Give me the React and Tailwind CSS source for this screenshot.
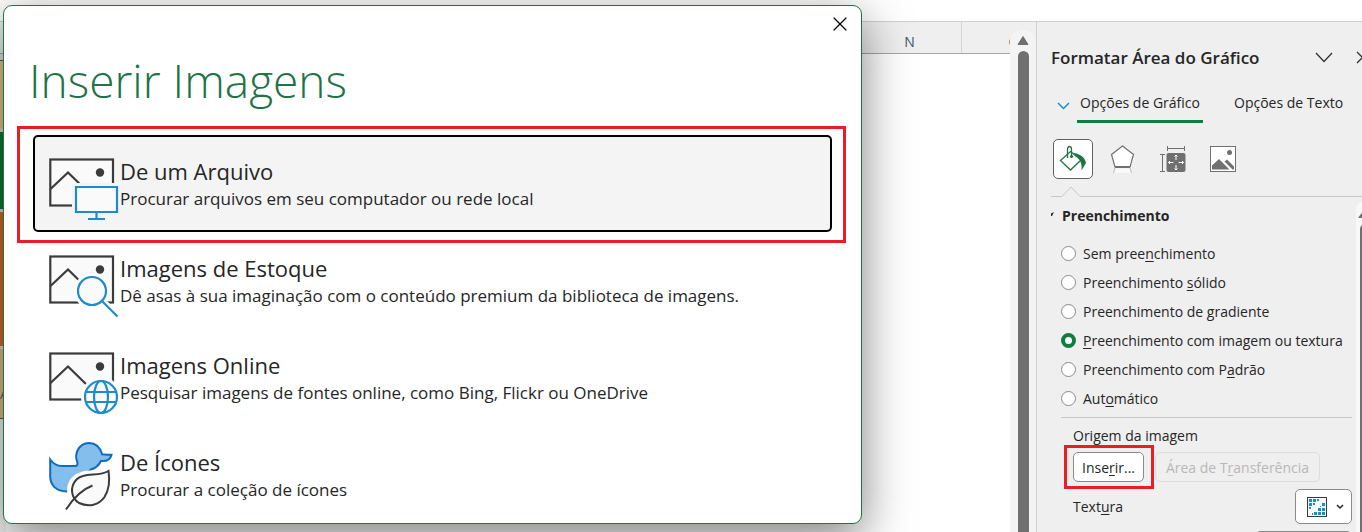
import { useState } from "react"
import { X } from "lucide-react"

const sources = [
  {
    id: "file",
    title: "De um Arquivo",
    description: "Procurar arquivos em seu computador ou rede local",
  },
  {
    id: "stock",
    title: "Imagens de Estoque",
    description: "Dê asas à sua imaginação com o conteúdo premium da biblioteca de imagens.",
  },
  {
    id: "online",
    title: "Imagens Online",
    description: "Pesquisar imagens de fontes online, como Bing, Flickr ou OneDrive",
  },
  {
    id: "icons",
    title: "De Ícones",
    description: "Procurar a coleção de ícones",
  },
]

// before / key / after: the key letter is the underlined shortcut
const fills = [
  ["Sem pree", "n", "chimento"],
  ["Preenchimento ", "s", "ólido"],
  ["Preenchimento de ", "g", "radiente"],
  ["", "P", "reenchimento com imagem ou textura"],
  ["Preenchimento com P", "a", "drão"],
  ["Aut", "o", "mático"],
]

const SourceIcon = ({ id }) => {
  if (id === "icons") {
    return (
      <svg width="70" height="72" viewBox="0 2 70 72" fill="none" className="shrink-0">
        <path
          d="M1.200 19.500C4 23.500 8 26 13 26H26C28 26 29 25 28.300 22C26.500 18 27 14 28.500 10.500C31 5.500 35 3 40 3C46 3 51 7 53.200 14.300C56 15 59 14.700 62.500 14.700C61.500 19 57.500 21.500 52 21C50 25 47 28 42 29.500L18 51.500C7 51.500 1.200 45 1.200 36Z"
          fill="#83beec"
          stroke="#0f6cbd"
          strokeWidth="2"
        />
        <path
          d="M60 31C49 37 35 31 26 40C19 48 22 60 31 64C40 68 51 66 56 58C61 50 61 40 60 31Z"
          fill="#fff"
          stroke="#fff"
          strokeWidth="8"
        />
        <path
          d="M59.500 31C50 37 35 32 27.500 39.500C20.500 47 22 58 30 63C40 67.500 50 65 55.500 57C60.500 49 61 40 59.500 31Z"
          fill="#fafafa"
          stroke="#3b3b3b"
          strokeWidth="2"
        />
        <path d="M43.500 45.500C33 49.500 25 57 17 69.500" stroke="#3b3b3b" strokeWidth="2" />
      </svg>
    )
  }

  const halo = id === "file" ? "#f4f4f4" : "#fff"

  return (
    <svg width="70" height="72" viewBox="0 0 70 72" fill="none" className="shrink-0">
      <rect x="1.300" y="8.500" width="62.700" height="46" fill="#fafafa" stroke="#3b3b3b" strokeWidth="2.200" />
      <path d="M1.500 38L19 21.500L39 41" stroke="#3b3b3b" strokeWidth="2.200" />
      <circle cx="51" cy="21.500" r="4.200" fill="#3b3b3b" />
      {id === "file" && (
        <>
          <path d="M23 32H70V64H23Z" fill={halo} />
          <path d="M27 36H68V61H27Z" fill="#fafafa" stroke="#1e8bcd" strokeWidth="2.200" />
          <path d="M47.500 62V67.500M39 68H56" stroke="#1e8bcd" strokeWidth="2.200" />
        </>
      )}
      {id === "stock" && (
        <>
          <circle cx="43" cy="43" r="18" fill={halo} />
          <path d="M53 53L69 69" stroke={halo} strokeWidth="7" />
          <circle cx="43" cy="43" r="14" fill="#fafafa" stroke="#1e8bcd" strokeWidth="2.200" />
          <path d="M53 53L68.500 68.500" stroke="#1e8bcd" strokeWidth="2.200" />
        </>
      )}
      {id === "online" && (
        <>
          <circle cx="52" cy="52" r="20" fill={halo} />
          <circle cx="52" cy="52" r="16" fill="#fafafa" stroke="#1e8bcd" strokeWidth="2.200" />
          <ellipse cx="52" cy="52" rx="7" ry="16" stroke="#1e8bcd" strokeWidth="2.200" />
          <path d="M37 47H67M37 57H67" stroke="#1e8bcd" strokeWidth="2.200" />
        </>
      )}
    </svg>
  )
}

const InsertDialog = () => {
  const [selected, setSelected] = useState("file")

  return (
    <div
      role="dialog"
      aria-labelledby="dialog-title"
      className="absolute top-[5px] right-[500px] left-[3px] rounded-[9px] border border-[#217346] bg-white pr-[29px] pl-[29px] shadow-[0_14px_48px_rgba(0,0,0,0.5)]"
    >
      <button aria-label="Fechar" className="absolute top-[8px] right-[11px] flex size-5 items-center justify-center">
        <X className="size-6 shrink-0 text-black" strokeWidth={1.2} />
      </button>
      <h1 id="dialog-title" className="-ml-1 pt-[42px] text-[46px] leading-[64px] font-light text-[#217346]">
        Inserir Imagens
      </h1>
      <ul className="pt-[23px]">
        {sources.map((source) => (
          <li key={source.id} className="relative">
            <button
              onClick={() => setSelected(source.id)}
              className={`flex h-[97px] w-full items-start rounded-[5px] border-2 pt-[14px] pl-[14px] text-left ${
                selected === source.id ? "border-black bg-[#f4f4f4]" : "border-transparent"
              }`}
            >
              <SourceIcon id={source.id} />
              <span className="pt-[5px] pl-px text-[#262626]">
                <span className="block text-[22px] leading-[30px]">{source.title}</span>
                <span className="block text-[17px] leading-[26px]">{source.description}</span>
              </span>
            </button>
            {source.id === "file" && (
              <div className="pointer-events-none absolute -top-[9px] -right-[14px] -bottom-[11px] -left-[16px] border-3 border-[#ed1c24]" />
            )}
          </li>
        ))}
      </ul>
    </div>
  )
}

const Sheet = () => (
  <div className="flex min-w-0 flex-1 flex-col overflow-hidden bg-white">
    <div className="flex h-8 shrink-0 border-b border-[#a6a6a6] bg-[#efefef] text-[14px] text-[#44546a]">
      <div className="flex-1" />
      <div className="flex w-[104px] items-center justify-center border-r border-[#d4d4d4] pt-[9px] pb-px">N</div>
      <div className="-mr-[56px] flex w-[104px] shrink-0 items-center justify-center pt-[9px] pb-px">O</div>
    </div>
    {/* edge of the chart left of the dialog */}
    <div className="flex w-[6px] flex-1 flex-col">
      <div className="h-[7px] border-b border-[#555] bg-[#e4e4e4]" />
      <div className="h-[68px] bg-[#e6c88f]" />
      <div className="h-[80px] border-t-3 border-[#ddd] bg-[#0f7a37]" />
      <div className="h-[137px] border-t-3 border-[#ddd] bg-[#dc6a28]" />
      <div className="h-[73px] border-t-3 border-b border-t-[#ddd] border-b-[#555] bg-[#e0c084] pt-9 text-[13px] text-[#555]">
        A
      </div>
      <div className="flex-1 bg-[#f4f4f4]" />
    </div>
  </div>
)

const SheetScrollbar = () => (
  <div className="flex w-[26px] shrink-0 flex-col bg-[#efefef] pt-2">
    <div className="flex flex-1 flex-col items-center rounded-t-xl bg-[#f4f4f4]">
      <svg width="12" height="9" viewBox="0 0 12 9" className="mt-[6px]">
        <path d="M6 0.500L11 8.500H1Z" fill="#707070" stroke="#707070" strokeLinejoin="round" />
      </svg>
      <div className="mt-[6px] w-[11px] flex-1 rounded-t-md bg-[#707070]" />
    </div>
  </div>
)

const CategoryIcons = () => (
  <div className="mt-4 ml-[2px] flex h-10 items-center">
    <button
      aria-label="Preenchimento e linha"
      className="flex size-10 items-center justify-center rounded-[5px] border border-[#616161] bg-white"
    >
      <svg width="28" height="28" viewBox="0 0 28 28" fill="none">
        <path d="M11.500 6.500L22 15L11.500 25L1.500 15.500Z" stroke="#217346" strokeWidth="1.300" />
        <path d="M8.500 13V4.500C8.500 0.500 12.500 0.500 12.500 4.500V11" stroke="#217346" strokeWidth="1.300" />
        <circle cx="12.500" cy="11.500" r="1.600" fill="#217346" />
        <path d="M14 7.500C21 9 26 12 27 18L22.500 25.500C23 20 22 16 19.500 13.500Z" fill="#217346" />
      </svg>
    </button>
    <button aria-label="Efeitos" className="ml-[17px]">
      <svg width="26" height="30" viewBox="0 0 26 30" fill="none">
        <path d="M12.500 2L23.500 10.500L20 23H5L1.500 10.500Z" fill="#fff" stroke="#707070" strokeWidth="1.200" />
        <path d="M5 23H20" stroke="#707070" strokeWidth="2" />
        <path d="M5.500 24.500H19.500L21.500 29H3.500Z" fill="#f8f8f8" />
        <path d="M5 24L3.500 29M20 24L21.500 29" stroke="#bdbdbd" />
      </svg>
    </button>
    <button aria-label="Tamanho e propriedades" className="ml-[23px]">
      <svg width="27" height="28" viewBox="0 0 27 28" fill="none">
        <path d="M8.500 3.500H25.500M8.500 1V6M25.500 1V6M3.500 9.500V26.500M1 9.500H6M1 26.500H6" stroke="#707070" />
        <rect x="7.500" y="8" width="19" height="19" rx="2" fill="#707070" />
        <path
          d="M17 10V15M17 20V25M9.500 17.500H14.500M19.500 17.500H24.500M15.500 11.500L17 10L18.500 11.500M15.500 23.500L17 25L18.500 23.500M11 16L9.500 17.500L11 19M23 16L24.500 17.500L23 19"
          stroke="#fff"
        />
      </svg>
    </button>
    <button aria-label="Imagem" className="ml-[24px]">
      <svg width="26" height="26" viewBox="0 0 26 26" fill="none">
        <rect x="0.500" y="0.500" width="25" height="25" fill="#fff" stroke="#707070" />
        <circle cx="19.500" cy="6.500" r="2.500" fill="#707070" />
        <path d="M2 23.500V19.500L9 13L19.500 23.500ZM14.500 15.500L17 13.500L24 20.500V23.500H22.500Z" fill="#707070" />
      </svg>
    </button>
  </div>
)

const FormatPane = () => {
  const [fill, setFill] = useState(3)

  return (
    <aside className="relative w-[326px] shrink-0 overflow-hidden border-l border-[#d0d0d0] bg-[#efefef] pl-[14px] text-[14px] text-[#262626]">
      <div className="flex h-[71px] items-center">
        <h2 className="text-[17px] font-semibold whitespace-nowrap">Formatar Área do Gráfico</h2>
        <button aria-label="Opções do painel" className="ml-auto">
          <svg width="18" height="11" viewBox="0 0 18 11" fill="none">
            <path d="M1 1L9 9.500L17 1" stroke="#333" strokeWidth="1.300" />
          </svg>
        </button>
        <button aria-label="Fechar painel" className="-mr-[7px] ml-[23px]">
          <svg width="13" height="13" viewBox="0 0 13 13" fill="none">
            <path d="M1 1L12 12M12 1L1 12" stroke="#333" strokeWidth="1.300" />
          </svg>
        </button>
      </div>

      <div className="flex h-[30px] pl-[6px] whitespace-nowrap">
        <svg width="13" height="8" viewBox="0 0 13 8" fill="none" className="mt-[9px] mr-[7px] shrink-0">
          <path d="M1 1L6.500 6.500L12 1" stroke="#1e8bcd" strokeWidth="1.500" />
        </svg>
        <button className="flex w-[126px] items-start justify-center border-b-3 border-[#107c41] leading-5">
          Opções de Gráfico
        </button>
        <button className="ml-[31px] flex items-start leading-5">Opções de Texto</button>
      </div>

      <CategoryIcons />

      <div className="mt-[7px] flex items-end">
        <div className="w-[11px] border-b border-[#c8c8c8]" />
        <svg width="18" height="11" viewBox="0 0 18 11" fill="none" className="shrink-0">
          <path d="M0 10.500L9 1L18 10.500" stroke="#c8c8c8" />
        </svg>
        <div className="flex-1 border-b border-[#c8c8c8]" />
      </div>

      <div className="flex h-9 items-center">
        <svg width="4" height="6" viewBox="0 0 4 6" className="mr-[7px]">
          <path d="M0 1.500L3 0L1 4H0Z" fill="#262626" />
        </svg>
        <h3 className="font-bold">Preenchimento</h3>
      </div>

      <div className="mt-[6px] pl-[10px]">
        {fills.map(([before, key, after], i) => (
          <label key={i} className="flex h-[29px] items-center whitespace-nowrap">
            <input
              type="radio"
              name="fill"
              checked={fill === i}
              onChange={() => setFill(i)}
              className="mr-[7px] size-[15px] shrink-0 appearance-none rounded-full border border-[#8a8a8a] bg-white checked:border-4 checked:border-[#107c41]"
            />
            <span>
              {before}
              <u className="underline-offset-2">{key}</u>
              {after}
            </span>
          </label>
        ))}
      </div>

      <div className="mt-1 mr-[10px] ml-[10px] border-t border-[#c8c8c8] pt-2 pl-3">
        <p className="leading-5">Origem da imagem</p>
        <div className="mt-[6px] flex gap-[11px] whitespace-nowrap">
          <div className="relative">
            <button className="h-[30px] w-[71px] rounded-[5px] border border-[#8a8a8a] bg-white">
              Inse<u className="underline-offset-2">r</u>ir...
            </button>
            <div className="pointer-events-none absolute -top-[7px] -right-[10px] -bottom-[7px] -left-[9px] border-3 border-[#ed1c24]" />
          </div>
          <button disabled className="h-[30px] w-[165px] rounded-[5px] border border-[#dcdcdc] text-[#b8b8b8]">
            Área de T<u className="underline-offset-2">r</u>ansferência
          </button>
        </div>
        <div className="mt-[7px] flex items-center justify-between">
          <span>
            Text<u className="underline-offset-2">u</u>ra
          </span>
          <button
            aria-label="Textura"
            className="flex h-[35px] w-[57px] items-center justify-between rounded-[5px] border border-[#8a8a8a] bg-white pr-[7px] pl-[11px]"
          >
            <svg width="20" height="20" viewBox="0 0 20 20" fill="none">
              <rect x="0.500" y="0.500" width="19" height="19" fill="#fafafa" stroke="#3b3b3b" />
              <path
                d="M2 2H5V5H2ZM6 2H9V5H6ZM10 2H12V4H10ZM2 6H5V9H2ZM6 6H8V8H6ZM2 10H4V12H2ZM15 6H18V9H15ZM13 9H14V10H13ZM11 11H14V14H11ZM15 11H18V14H15ZM7 15H10V18H7ZM11 15H14V18H11ZM15 15H18V18H15ZM5 16H6V18H5Z"
                fill="#1e8bcd"
              />
            </svg>
            <svg width="8" height="6" viewBox="0 0 8 6" fill="none">
              <path d="M1 1L4 4L7 1" stroke="#262626" strokeWidth="1.500" />
            </svg>
          </button>
        </div>
        <div className="mt-[7px] ml-auto h-[30px] w-[97px] rounded-[5px] border border-[#8a8a8a] bg-white" />
      </div>

      {/* pane scrollbar, partly outside the window */}
      <div className="absolute top-[180px] -right-[8px] bottom-0 flex w-[14px] flex-col items-center rounded-t-lg bg-[#f8f8f8] pt-[9px]">
        <svg width="10" height="7" viewBox="0 0 10 7">
          <path d="M5 0L10 7H0Z" fill="#707070" />
        </svg>
        <div className="mt-[6px] mr-[-4px] w-[10px] flex-1 rounded-t-md bg-[#707070]" />
      </div>
    </aside>
  )
}

export default function App() {
  return (
    <div className="relative flex h-screen flex-col overflow-hidden bg-white font-['Open_Sans','Noto_Sans',sans-serif]">
      <div className="h-[22px] shrink-0 border-b border-[#cfcfcf]" />
      <div className="flex min-h-0 flex-1">
        <Sheet />
        <SheetScrollbar />
        <FormatPane />
      </div>
      <InsertDialog />
    </div>
  )
}
